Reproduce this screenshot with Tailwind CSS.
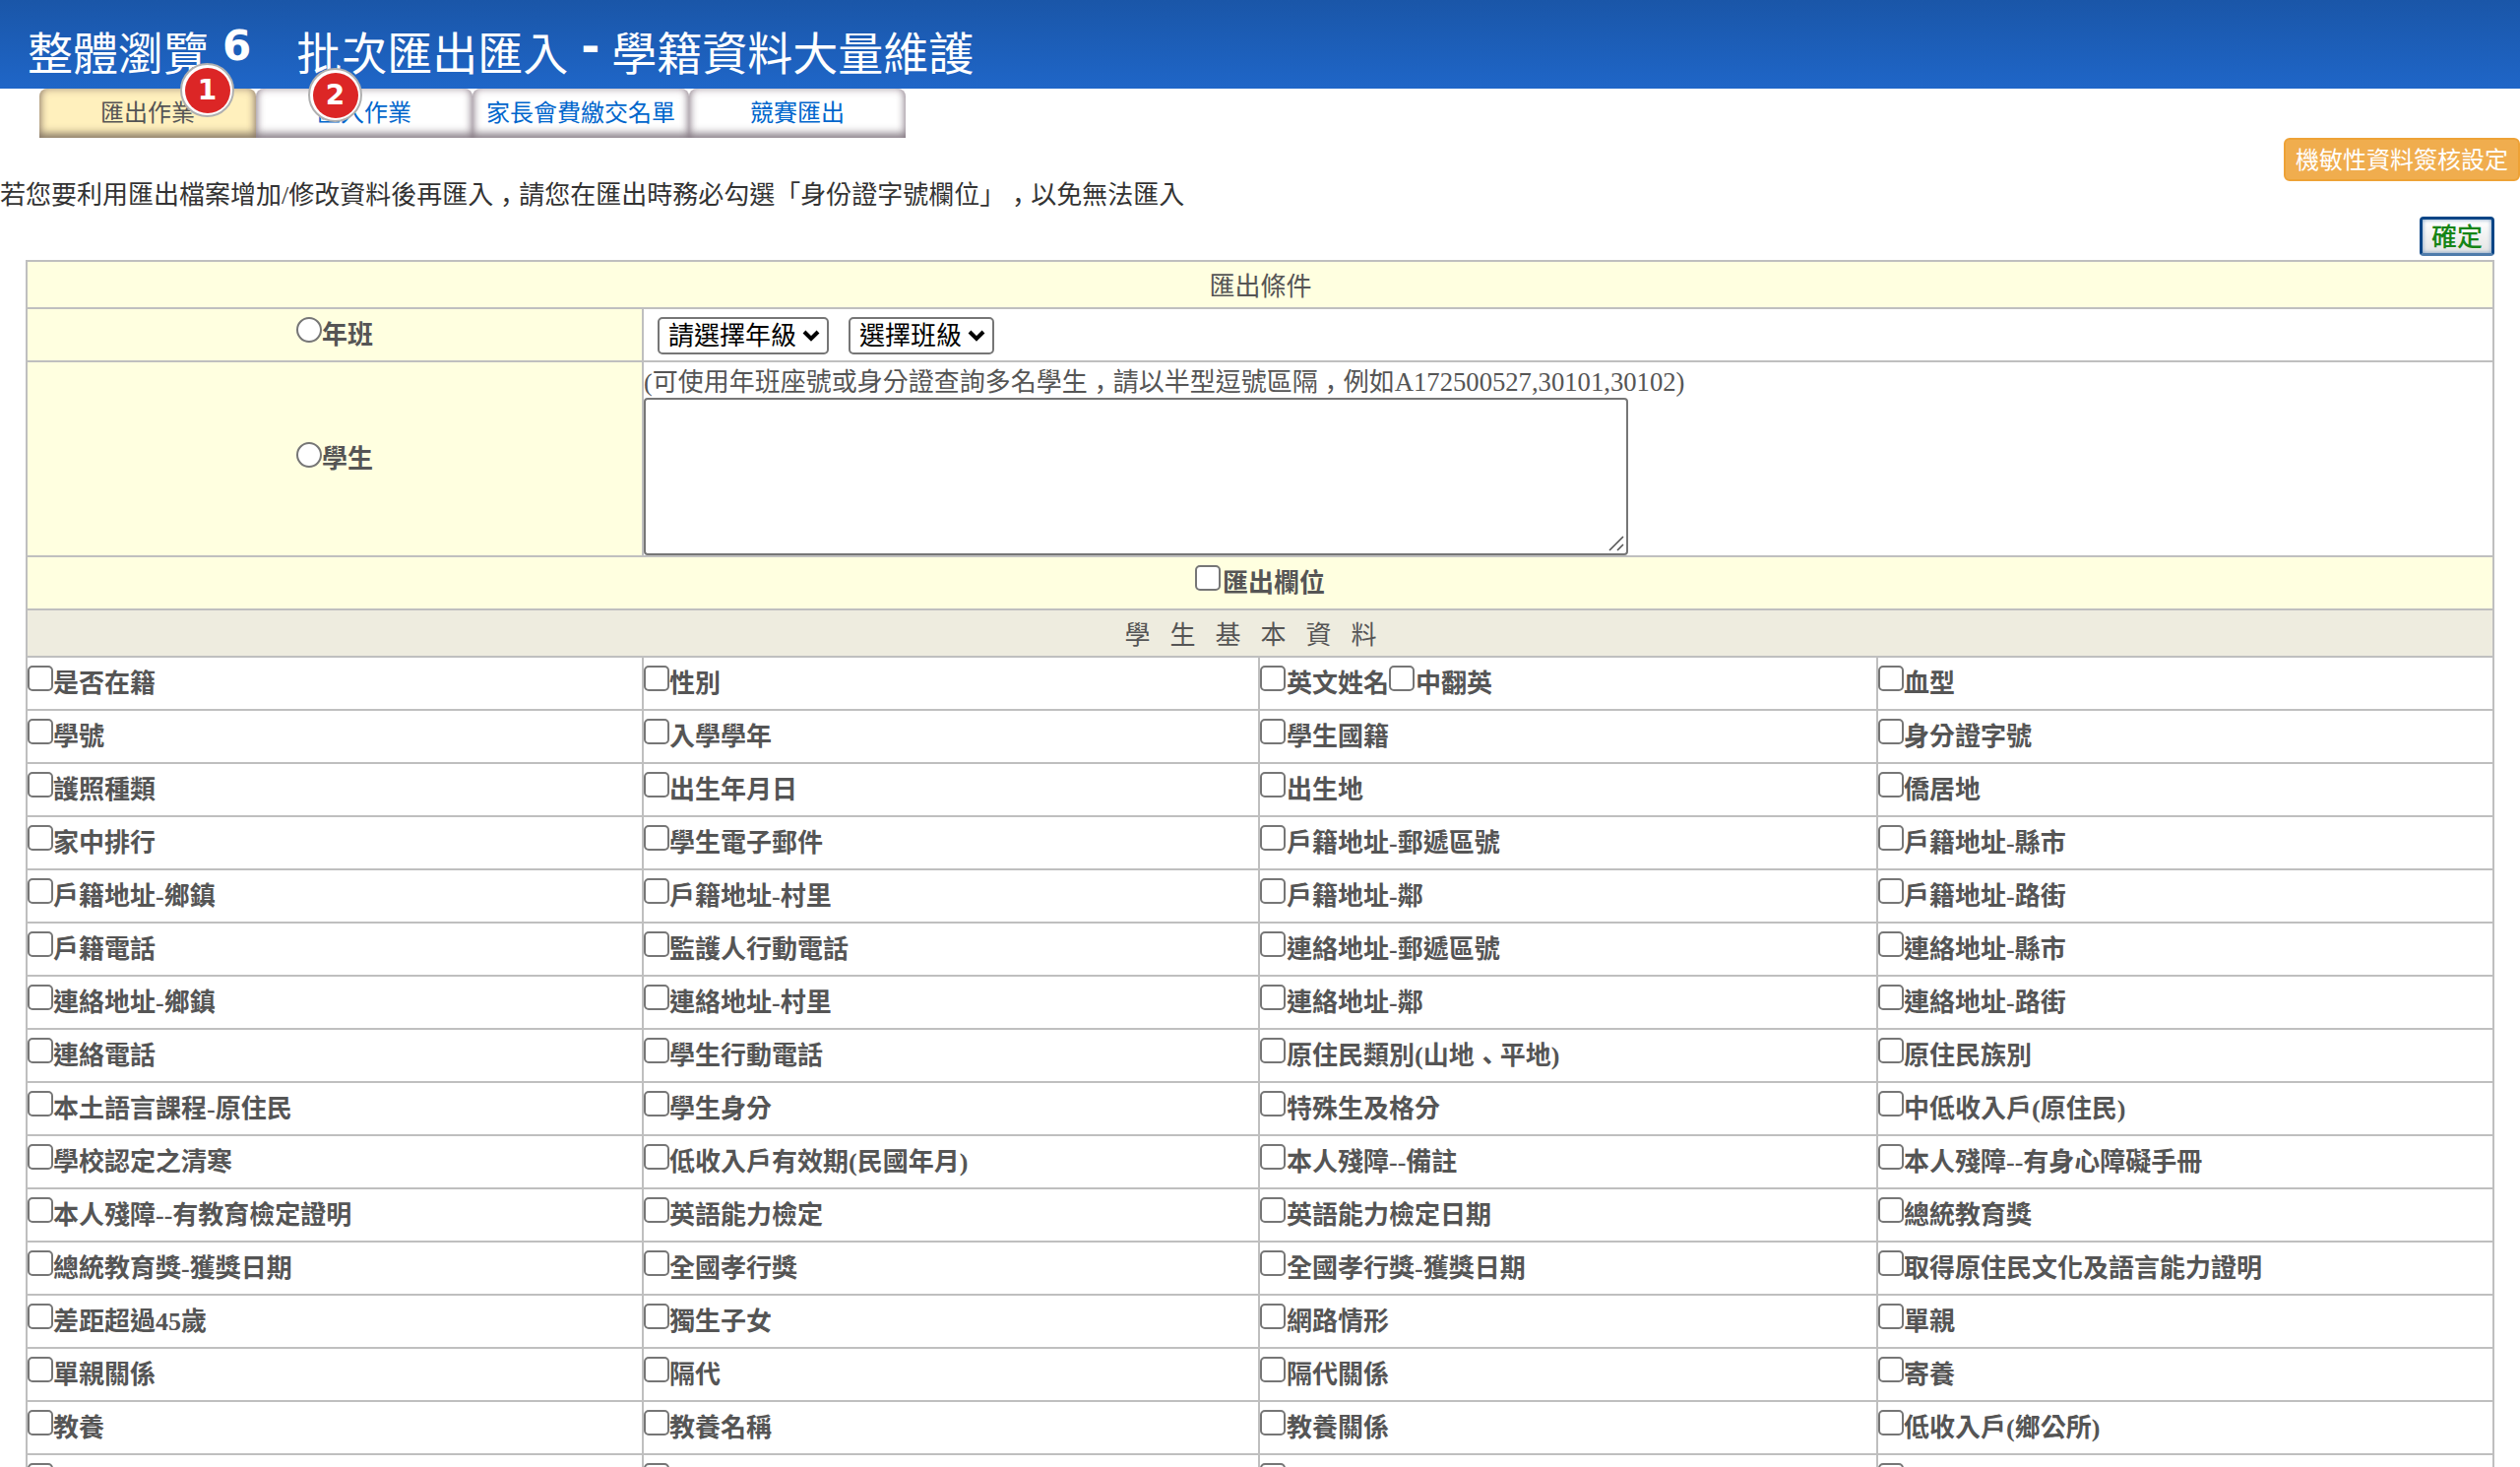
<!DOCTYPE html>
<html lang="zh-Hant">
<head>
<meta charset="utf-8">
<title>學籍資料大量維護</title>
<script src="https://cdn.jsdelivr.net/npm/@tailwindcss/browser@4"></script>
</head>
<body class="h-[1490px] overflow-hidden bg-white font-['Liberation_Serif','Noto_Sans_CJK_TC',serif] text-[26px] leading-[36px] text-[#555] [text-spacing-trim:space-all]">
<header class="relative h-[90px] bg-gradient-to-b from-[#1a56a8] to-[#1f66c8] pl-[28px] pt-[25px] font-['DejaVu_Sans','Noto_Sans_CJK_TC',sans-serif] text-white">
  <h1 class="flex items-center whitespace-nowrap text-[46px] leading-[60px]"><span>整體瀏覽</span><span class="ml-[14px] -mt-[16px] text-[42px] font-bold">6</span><span class="ml-[46px]">批次匯出匯入</span><span class="ml-[13px] mr-[12px] -mt-[16px] font-bold">-</span><span>學籍資料大量維護</span></h1>
</header>
<nav class="relative flex h-[50px] pl-[40px] font-['DejaVu_Sans','Noto_Sans_CJK_TC',sans-serif] text-[24px] leading-[50px] text-[#0066cc]">
  <div class="w-[220px] rounded-t-[8px] bg-[#fff0bd] text-center text-[#555] shadow-[inset_0_-5px_8px_rgba(80,70,60,.55),inset_0_0_8px_rgba(110,80,90,.5)]">匯出作業</div>
  <div class="w-[220px] rounded-t-[8px] bg-white text-center shadow-[inset_0_-5px_8px_rgba(80,70,80,.55),inset_0_0_8px_rgba(110,80,100,.5)]">匯入作業</div>
  <div class="w-[220px] rounded-t-[8px] bg-white text-center shadow-[inset_0_-5px_8px_rgba(80,70,80,.55),inset_0_0_8px_rgba(110,80,100,.5)]">家長會費繳交名單</div>
  <div class="w-[220px] rounded-t-[8px] bg-white text-center shadow-[inset_0_-5px_8px_rgba(80,70,80,.55),inset_0_0_8px_rgba(110,80,100,.5)]">競賽匯出</div>
  <span class="absolute left-[183px] top-[-26px] flex size-[55px] items-center justify-center rounded-full border-2 border-[#b0b0b0] bg-white"><b class="flex size-[46px] items-center justify-center rounded-full bg-[#dc2626] text-[28px] text-white">1</b></span>
  <span class="absolute left-[313px] top-[-21px] flex size-[55px] items-center justify-center rounded-full border-2 border-[#b0b0b0] bg-white"><b class="flex size-[46px] items-center justify-center rounded-full bg-[#dc2626] text-[28px] text-white">2</b></span>
</nav>
<div class="flex justify-end"><button class="h-[44px] w-[240px] whitespace-nowrap rounded-[6px] border-2 border-[#eea236] bg-[#f0ad4e] pb-[2px] font-['Noto_Sans_CJK_TC',sans-serif] text-[24px] leading-[38px] text-white">機敏性資料簽核設定</button></div>
<p class="-mt-[6px] h-[42px] whitespace-nowrap leading-[42px] text-[#333]">若您要利用匯出檔案增加/修改資料後再匯入<span class="relative top-[8px]">，</span>請您在匯出時務必勾選「身份證字號欄位」<span class="relative top-[8px]">，</span>以免無法匯入</p>
<div class="flex h-[44px] justify-end pr-[26px]"><button class="h-[40px] w-[76px] rounded-[4px] border-[3px] border-[#0a4586] border-b-[#4f7cab] bg-gradient-to-b from-white to-[#e4e4e4] pb-[2px] font-['Noto_Sans_CJK_TC',sans-serif] text-[26px] font-medium leading-[32px] text-[#168516] shadow-[inset_0_0_4px_#6f94bd]">確定</button></div>
<main class="mx-[26px] border-l-2 border-t-2 border-[#bfbfbf]" id="grid">
  <div class="h-[48px] border-b-2 border-r-2 border-[#bfbfbf] bg-[#ffffe0] pl-[1px] text-center leading-[52px]">匯出條件</div>
  <div class="flex h-[54px]">
    <div class="flex w-[626px] justify-center border-b-2 border-r-2 border-[#bfbfbf] bg-[#ffffe0] font-bold"><i class="mt-[8px] size-[26px] rounded-full border-2 border-[#767676] bg-white"></i><span class="leading-[53px]">年班</span></div>
    <div class="flex flex-1 gap-[20px] border-b-2 border-r-2 border-[#bfbfbf] pl-[14px] pt-[8px] text-black">
      <div class="flex h-[38px] w-[174px] items-center gap-[6px] whitespace-nowrap rounded-[5px] border-2 border-[#767676] pl-[9px] leading-[34px]"><span class="pt-[2px]">請選擇年級</span><svg class="w-[18px]" viewBox="0 0 18 12"><path d="M2 2l7 7 7-7" fill="none" stroke="#000" stroke-width="4"/></svg></div>
      <div class="flex h-[38px] w-[148px] items-center gap-[6px] whitespace-nowrap rounded-[5px] border-2 border-[#767676] pl-[9px] leading-[34px]"><span class="pt-[2px]">選擇班級</span><svg class="w-[18px]" viewBox="0 0 18 12"><path d="M2 2l7 7 7-7" fill="none" stroke="#000" stroke-width="4"/></svg></div>
    </div>
  </div>
  <div class="flex h-[198px]">
    <div class="flex w-[626px] items-center justify-center border-b-2 border-r-2 border-[#bfbfbf] bg-[#ffffe0] font-bold"><i class="-mt-[9px] size-[26px] rounded-full border-2 border-[#767676] bg-white"></i><span class="pt-[2px]">學生</span></div>
    <div class="flex-1 border-b-2 border-r-2 border-[#bfbfbf]">
      <p class="h-[36px] whitespace-nowrap leading-[40px]">(可使用年班座號或身分證查詢多名學生<span class="relative top-[8px]">，</span>請以半型逗號區隔<span class="relative top-[8px]">，</span>例如<span class="text-[26.67px]">A172500527,30101,30102)</span></p>
      <div class="flex h-[160px] w-[1000px] items-end justify-end rounded-[4px] border-2 border-[#767676] p-[2px]"><svg class="size-[16px]" viewBox="0 0 16 16"><path d="M1 15L15 1M9 15l6-6" stroke="#555" stroke-width="1.6"/></svg></div>
    </div>
  </div>
  <div class="flex h-[54px] justify-center border-b-2 border-r-2 border-[#bfbfbf] bg-[#ffffe0] font-bold"><i class="mr-[2px] mt-[8px] size-[26px] rounded-[5px] border-2 border-[#767676] bg-white"></i><span class="leading-[54px]">匯出欄位</span></div>
  <div class="h-[48px] whitespace-pre border-b-2 border-r-2 border-[#bfbfbf] bg-[#eeecdf] text-center leading-[52px]"><span class="pl-[1px] tracking-[20px]">學生基本資料</span></div>
</main>
<script>
const rows = [
["是否在籍","性別","英文姓名|中翻英","血型"],
["學號","入學學年","學生國籍","身分證字號"],
["護照種類","出生年月日","出生地","僑居地"],
["家中排行","學生電子郵件","戶籍地址-郵遞區號","戶籍地址-縣市"],
["戶籍地址-鄉鎮","戶籍地址-村里","戶籍地址-鄰","戶籍地址-路街"],
["戶籍電話","監護人行動電話","連絡地址-郵遞區號","連絡地址-縣市"],
["連絡地址-鄉鎮","連絡地址-村里","連絡地址-鄰","連絡地址-路街"],
["連絡電話","學生行動電話","原住民類別(山地<span class=\"relative top-[6px] -left-[7px]\">、</span>平地)","原住民族別"],
["本土語言課程-原住民","學生身分","特殊生及格分","中低收入戶(原住民)"],
["學校認定之清寒","低收入戶有效期(民國年月)","本人殘障--備註","本人殘障--有身心障礙手冊"],
["本人殘障--有教育檢定證明","英語能力檢定","英語能力檢定日期","總統教育獎"],
["總統教育獎-獲獎日期","全國孝行獎","全國孝行獎-獲獎日期","取得原住民文化及語言能力證明"],
["差距超過45歲","獨生子女","網路情形","單親"],
["單親關係","隔代","隔代關係","寄養"],
["教養","教養名稱","教養關係","低收入戶(鄉公所)"],
["家長僑外籍註記","家長僑外籍","家長僑外關係","家長僑外籍生效日期"]];
const box = '<i class="mt-[8px] size-[26px] shrink-0 rounded-[5px] border-2 border-[#767676] bg-white"></i>';
document.getElementById('grid').insertAdjacentHTML('beforeend', rows.map(r =>
  '<div class="grid h-[54px] grid-cols-[626px_626px_628px_1fr] font-bold">' + r.map((c, i) =>
    '<div class="flex whitespace-nowrap border-b-2 border-r-2 border-[#bfbfbf] leading-[54px]">' +
    c.split('|').map(t => box + '<span class="h-[52px] ' + (i === 2 ? 'pl-[1px]' : '') + '">' + t + '</span>').join('') + '</div>').join('') + '</div>').join(''));
</script>
</body>
</html>
